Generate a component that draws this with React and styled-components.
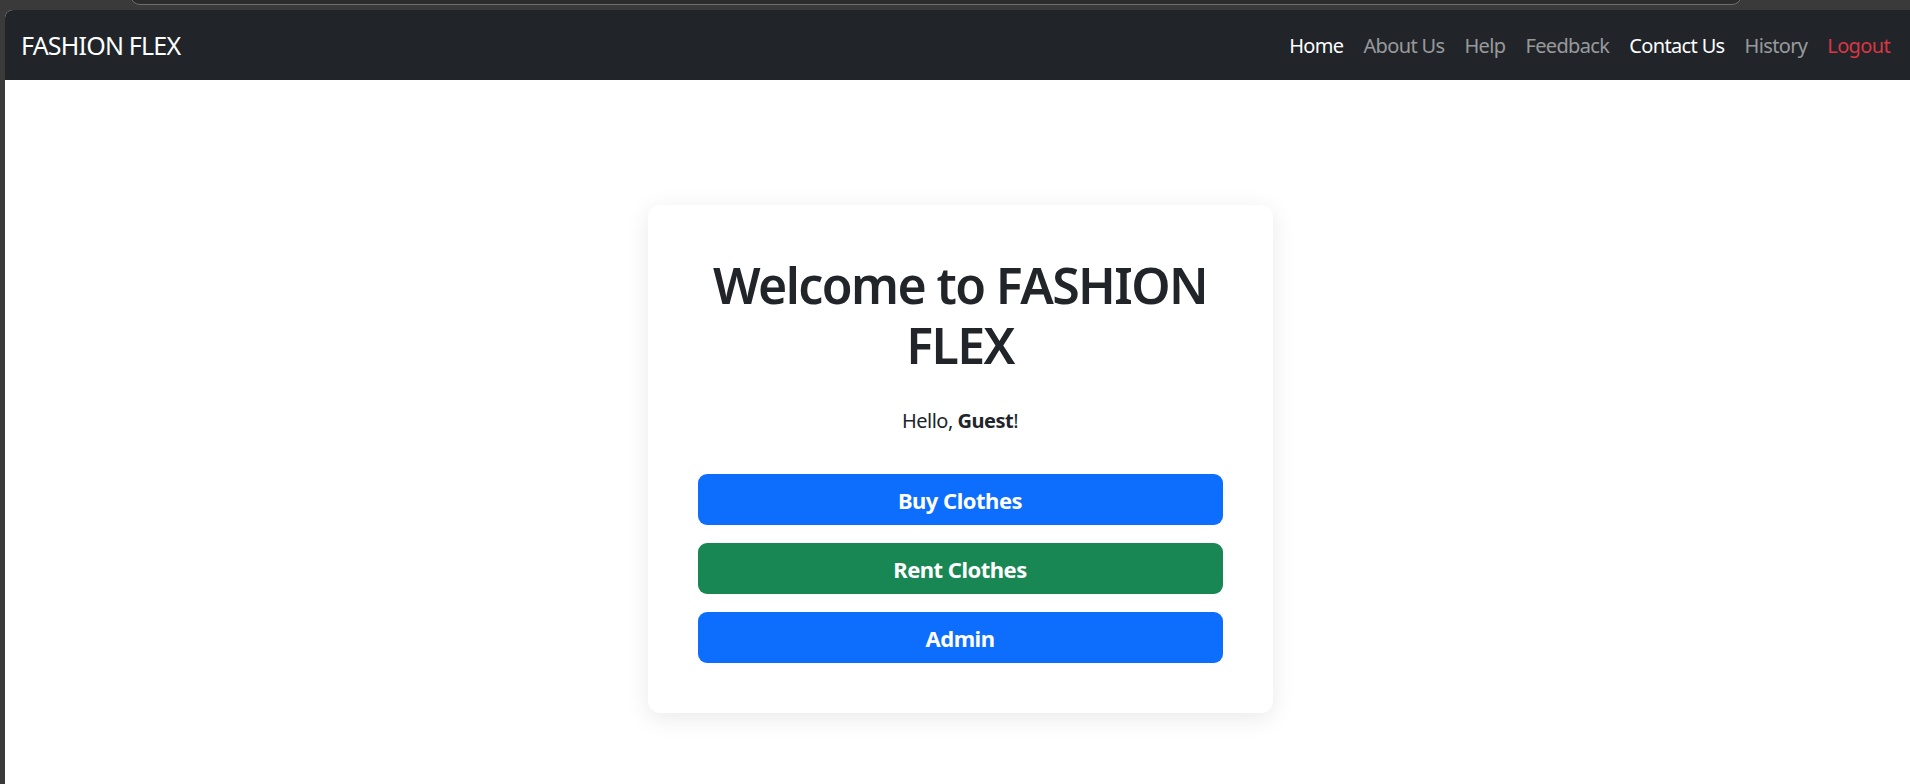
import React from 'react';
import styled, { createGlobalStyle } from 'styled-components';

const GlobalStyle = createGlobalStyle`
  html, body {
    margin: 0;
    padding: 0;
    background: #3a3a3a;
    overflow: hidden;
  }
  body {
    font-family: "Noto Sans", "Open Sans", sans-serif;
    color: #212529;
  }
`;

const Frame = styled.div`
  width: 1910px;
  height: 784px;
  display: flex;
  flex-direction: column;
  background: #3a3a3a;
  overflow: hidden;
`;

const TopStrip = styled.div`
  height: 10px;
  flex-shrink: 0;
  display: flex;
  align-items: flex-end;
  overflow: hidden;
`;

const AddressBar = styled.div`
  margin-left: 130px;
  width: 1612px;
  height: 20px;
  margin-bottom: 5px;
  background: #2c2c2c;
  border: 1px solid #6e6e6e;
  border-radius: 10px;
  box-sizing: border-box;
`;

const Viewport = styled.div`
  flex: 1;
  margin-left: 5px;
  width: 1910px;
  background: #fff;
  border-radius: 8px 0 0 0;
  overflow: hidden;
  display: flex;
  flex-direction: column;
`;

const Navbar = styled.nav`
  height: 70px;
  flex-shrink: 0;
  background: #212529;
  display: flex;
  align-items: center;
  justify-content: space-between;
  padding: 0 15px 0 16px;
`;

const Brand = styled.a`
  color: #fff;
  font-size: 25px;
  text-decoration: none;
  letter-spacing: -0.8px;
`;

const NavList = styled.ul`
  display: flex;
  list-style: none;
  margin: 0;
  padding: 0;
`;

const NavLink = styled.a`
  display: block;
  padding: 10px;
  font-size: 20px;
  text-decoration: none;
  letter-spacing: -0.65px;
  color: ${(p) => (p.tone === 'active' ? '#fff' : p.tone === 'danger' ? '#dc3545' : 'rgba(255, 255, 255, 0.55)')};
`;

const Main = styled.main`
  flex: 1;
  display: flex;
  justify-content: center;
  align-items: flex-start;
  padding-top: 125px;
`;

const Card = styled.div`
  width: 625px;
  box-sizing: border-box;
  padding: 50px;
  background: #fff;
  border-radius: 12px;
  box-shadow: 0 5px 25px rgba(0, 0, 0, 0.09);
  text-align: center;
`;

const Title = styled.h1`
  margin: 0 0 31px;
  font-size: 50px;
  line-height: 60px;
  font-weight: 600;
  letter-spacing: -1.6px;
  color: #212529;
`;

const Greeting = styled.p`
  margin: 0 0 38px;
  font-size: 20px;
  line-height: 30px;
  letter-spacing: -0.5px;
`;

const Actions = styled.div`
  display: flex;
  flex-direction: column;
  gap: 18px;
`;

const Button = styled.button`
  height: 51px;
  width: 100%;
  border: none;
  border-radius: 9px;
  font-family: inherit;
  font-size: 22px;
  font-weight: 700;
  letter-spacing: -0.5px;
  color: #fff;
  background: ${(p) => (p.variant === 'success' ? '#198754' : '#0d6efd')};
  cursor: pointer;
`;

const links = [
  { label: 'Home', tone: 'active' },
  { label: 'About Us' },
  { label: 'Help' },
  { label: 'Feedback' },
  { label: 'Contact Us', tone: 'active' },
  { label: 'History' },
  { label: 'Logout', tone: 'danger' },
];

const App = () => (
  <>
    <GlobalStyle />
    <Frame>
      <TopStrip>
        <AddressBar />
      </TopStrip>
      <Viewport>
        <Navbar>
          <Brand href="#">FASHION FLEX</Brand>
          <NavList>
            {links.map((l) => (
              <li key={l.label}>
                <NavLink href="#" tone={l.tone}>{l.label}</NavLink>
              </li>
            ))}
          </NavList>
        </Navbar>
        <Main>
          <Card>
            <Title>Welcome to FASHION FLEX</Title>
            <Greeting>Hello, <strong>Guest</strong>!</Greeting>
            <Actions>
              <Button>Buy Clothes</Button>
              <Button variant="success">Rent Clothes</Button>
              <Button>Admin</Button>
            </Actions>
          </Card>
        </Main>
      </Viewport>
    </Frame>
  </>
);

export default App;
